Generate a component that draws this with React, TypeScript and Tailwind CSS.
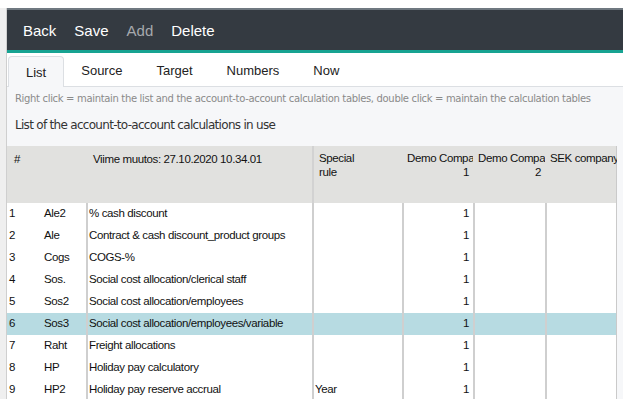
const rows = [
  { n: 1, code: "Ale2", name: "% cash discount", rule: "", v: "1" },
  { n: 2, code: "Ale", name: "Contract & cash discount_product groups", rule: "", v: "1" },
  { n: 3, code: "Cogs", name: "COGS-%", rule: "", v: "1" },
  { n: 4, code: "Sos.", name: "Social cost allocation/clerical staff", rule: "", v: "1" },
  { n: 5, code: "Sos2", name: "Social cost allocation/employees", rule: "", v: "1" },
  { n: 6, code: "Sos3", name: "Social cost allocation/employees/variable", rule: "", v: "1" },
  { n: 7, code: "Raht", name: "Freight allocations", rule: "", v: "1" },
  { n: 8, code: "HP", name: "Holiday pay calculatory", rule: "", v: "1" },
  { n: 9, code: "HP2", name: "Holiday pay reserve accrual", rule: "Year", v: "1" },
];

const tabs = ["List", "Source", "Target", "Numbers", "Now"];

const cols = "grid grid-cols-[33px_46px_226px_90px_71px_72px_72px]";

export default function App() {
  return (
    <div className="w-[623px] h-[399px] overflow-hidden bg-white font-['Liberation_Sans',sans-serif]">
      <div className="h-[8px] bg-white" />
      <div className="flex h-[391px] overflow-hidden">
        <div className="w-[7px] shrink-0 bg-[#efefef] border-r border-[#cfcfcf]" />
        <div className="flex-1 flex flex-col bg-[#f6f7f9] [&>*]:shrink-0">
          <div className="h-[2px] bg-[#6f7880]" />
          <div className="h-[40px] bg-[#343a41] flex items-center gap-[18px] pl-[16px] pt-[2px] text-[15px] text-white">
            <span>Back</span>
            <span>Save</span>
            <span className="text-[#a6a9ad]">Add</span>
            <span>Delete</span>
          </div>
          <div className="h-[3px] bg-[#17a392]" />
          <div className="h-[34px] bg-white border-b border-[#dcdfe3] flex items-end pl-[1px] text-[13px] text-[#222]">
            {tabs.map((t, i) => (
              <div
                key={t}
                className={
                  i === 0
                    ? "h-[31px] px-[17px] pt-[1px] flex items-center bg-[#f6f7f9] border border-b-0 border-[#dcdfe3] rounded-t-[4px] -mb-px"
                    : "h-[31px] px-[17px] pt-[1px] flex items-center"
                }
              >
                {t}
              </div>
            ))}
          </div>
          <div className="pl-[8px] pt-[4px] text-[10px] text-[#8a8a8a] font-['DejaVu_Sans',sans-serif] tracking-[-0.33px]">
            Right click = maintain the list and the account-to-account calculation tables, double click = maintain the calculation tables
          </div>
          <div className="pl-[8px] pt-[10px] text-[12px] text-[#333] font-['DejaVu_Sans',sans-serif] tracking-[-0.7px]">
            List of the account-to-account calculations in use
          </div>
          <div className="mt-[12px] w-[610px] text-[11.5px] text-[#111] tracking-[-0.38px]">
            <div className={`${cols} h-[57px] bg-[#e1e1df] border-r border-[#cacaca]`}>
              <div className="pl-[7px] pt-[5px]">#</div>
              <div className="col-span-2 pl-[53px] pt-[5px] whitespace-nowrap">Viime muutos: 27.10.2020 10.34.01</div>
              <div className="border-l-2 border-[#d2d2d2] pl-[5px] pt-[5px] leading-[14px]">
                Special
                <br />
                rule
              </div>
              <div className="pl-[5px] pr-[2px] pt-[5px] leading-[14px] text-right overflow-hidden whitespace-nowrap">
                <div>Demo Company</div>
                <div className="pr-[2px]">1</div>
              </div>
              <div className="pl-[5px] pr-[2px] pt-[5px] leading-[14px] text-right overflow-hidden whitespace-nowrap">
                <div>Demo Company</div>
                <div className="pr-[2px]">2</div>
              </div>
              <div className="pl-[5px] pt-[5px] leading-[14px] overflow-hidden whitespace-nowrap">SEK company</div>
            </div>
            {rows.map((r) => (
              <div
                key={r.n}
                className={`${cols} h-[22px] items-stretch border-r border-[#cacaca] ${r.n === 6 ? "bg-[#b7dbe2]" : "bg-white"}`}
              >
                <div className="pl-[2px] flex items-center">{r.n}</div>
                <div className="pl-[4px] flex items-center">{r.code}</div>
                <div className="border-l-2 border-[#cfcfcf] pl-[1px] flex items-center whitespace-nowrap">{r.name}</div>
                <div className="border-l-2 border-[#cfcfcf] pl-[1px] flex items-center">{r.rule}</div>
                <div className="border-l-2 border-[#cfcfcf] pr-[4px] flex items-center justify-end">{r.v}</div>
                <div className="border-l-2 border-[#cfcfcf]" />
                <div className="border-l-2 border-[#cfcfcf]" />
              </div>
            ))}
          </div>
        </div>
      </div>
    </div>
  );
}
